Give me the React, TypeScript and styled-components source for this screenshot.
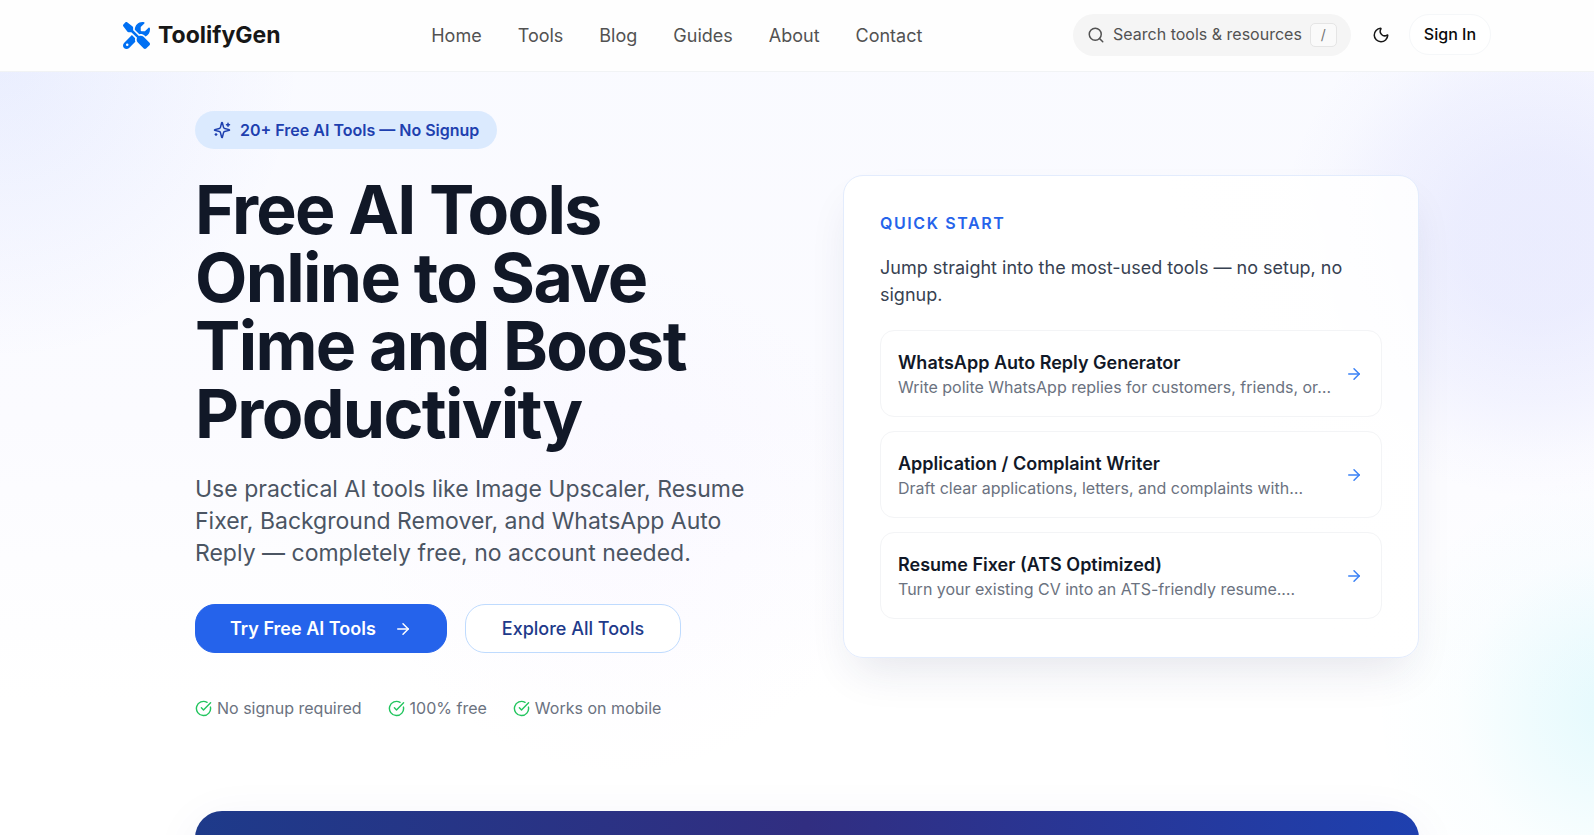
import React from "react";
import styled, { createGlobalStyle } from "styled-components";
import { ArrowRight, CircleCheckBig, Moon, Search } from "lucide-react";

const Global = createGlobalStyle`
  *, *::before, *::after { box-sizing: border-box; }
  body {
    margin: 0;
    background: #ffffff;
    color: #111827;
    font-family: Inter, "Liberation Sans", sans-serif;
    font-size: 18px;
    line-height: 27px;
  }
  a { color: inherit; text-decoration: none; }
  button { font: inherit; cursor: pointer; }
  h1, h2, h3, p, ul { margin: 0; padding: 0; }
`;

const Page = styled.div`
  min-height: 100vh;
  overflow: hidden;
  background:
    radial-gradient(circle 260px at calc(100% - 56px) 240px, rgba(129, 140, 248, 0.13), rgba(129, 140, 248, 0.12) 30%, rgba(129, 140, 248, 0.07) 62%, rgba(129, 140, 248, 0.02) 84%, rgba(129, 140, 248, 0) 100%),
    radial-gradient(circle 240px at calc(100% + 20px) 710px, rgba(34, 211, 238, 0.12), rgba(34, 211, 238, 0.08) 30%, rgba(34, 211, 238, 0.02) 65%, rgba(34, 211, 238, 0) 100%),
    radial-gradient(circle 300px at 0 60px, rgba(96, 130, 250, 0.1), rgba(96, 130, 250, 0.05) 50%, rgba(96, 130, 250, 0) 100%),
    radial-gradient(circle 260px at 620px 520px, rgba(216, 180, 254, 0.05), rgba(216, 180, 254, 0) 100%),
    linear-gradient(180deg, #f9faff 0, #fbfbff 420px, #ffffff 700px);
`;

const Header = styled.header`
  padding-left: 20px;
  background: #fefefe;
  border-bottom: 1px solid #f1f3f5;
`;

const HeaderInner = styled.div`
  display: flex;
  align-items: center;
  justify-content: space-between;
  max-width: 1440px;
  height: 71px;
  margin: 0 auto;
  padding: 0 36px;
`;

const Brand = styled.a`
  display: flex;
  align-items: center;
  gap: 8px;
  color: #171717;
  font-size: 23px;
  font-weight: 700;
`;

const Nav = styled.nav`
  display: flex;
  gap: 36px;
  color: #525252;
`;

const Actions = styled.div`
  display: flex;
  align-items: center;
  padding-bottom: 2px;
`;

const SearchButton = styled.button`
  display: flex;
  align-items: center;
  gap: 8px;
  height: 42px;
  padding: 0 14px;
  border: 0;
  border-radius: 21px;
  background: #f5f5f5;
  color: #525252;
  font-size: 16px;
`;

const Key = styled.kbd`
  display: grid;
  place-items: center;
  width: 27px;
  height: 24px;
  border: 1px solid #e5e5e5;
  border-radius: 5px;
  background: #fafafa;
  color: #737373;
  font: 14px Inter, sans-serif;
`;

const ThemeButton = styled.button`
  display: grid;
  place-items: center;
  width: 40px;
  height: 40px;
  margin: 0 8px 0 10px;
  padding: 0;
  border: 0;
  background: none;
  color: #171717;
`;

const SignIn = styled.a`
  padding: 6px 14px;
  border: 1px solid #f5f7f9;
  border-radius: 20px;
  background: #ffffff;
  color: #0a0a0a;
  font-size: 16px;
  font-weight: 500;
`;

const Main = styled.main`
  padding-left: 20px;
`;

const Container = styled.div`
  max-width: 1296px;
  margin: 0 auto;
  padding: 39px 36px 0;
`;

const Hero = styled.section`
  display: grid;
  grid-template-columns: 1fr 1fr;
  align-items: center;
  gap: 72px;
`;

const Badge = styled.div`
  display: inline-flex;
  align-items: center;
  gap: 9px;
  height: 38px;
  padding: 0 18px;
  border-radius: 19px;
  background: #dbeafe;
  color: #1e40af;
  font-size: 16px;
  font-weight: 600;
`;

const Intro = styled.div`
  display: flex;
  flex-direction: column;
  align-items: flex-start;
  padding-bottom: 2px;
`;

const Title = styled.h1`
  margin-top: 26px;
  font-size: 68px;
  font-weight: 700;
  line-height: 68px;
  letter-spacing: -0.025em;
`;

const Lead = styled.p`
  margin-top: 26px;
  color: #4b5563;
  font-size: 23px;
  line-height: 32px;
`;

const ButtonRow = styled.div`
  display: flex;
  gap: 18px;
  margin-top: 35px;
`;

const CtaLink = styled.a<{ $primary?: boolean }>`
  display: flex;
  align-items: center;
  gap: 18px;
  height: 49px;
  padding: 0 ${(p) => (p.$primary ? 34 : 36)}px;
  border: 1px solid ${(p) => (p.$primary ? "#2563eb" : "#bfdbfe")};
  border-radius: 20px;
  background: ${(p) => (p.$primary ? "#2563eb" : "#ffffff")};
  color: ${(p) => (p.$primary ? "#ffffff" : "#1e3a8a")};
  font-weight: ${(p) => (p.$primary ? 600 : 500)};
`;

const Perks = styled.ul`
  display: flex;
  gap: 26px;
  margin-top: 43px;
  list-style: none;
  color: #6b7280;
  font-size: 16px;
  line-height: 24px;
`;

const Perk = styled.li`
  display: flex;
  align-items: center;
  gap: 5px;
  svg { color: #22c55e; }
`;

const Card = styled.section`
  padding: 36px 36px 38px;
  border: 1px solid #e3ecfd;
  border-radius: 20px;
  background: linear-gradient(250deg, rgba(255, 255, 255, 0.85), #ffffff 35%);
  box-shadow: 0 22px 45px -12px rgba(30, 41, 90, 0.12);
`;

const CardLabel = styled.h2`
  color: #2563eb;
  font-size: 16px;
  font-weight: 600;
  line-height: 22px;
  letter-spacing: 0.1em;
`;

const CardText = styled.p`
  margin-top: 20px;
  color: #374151;
`;

const ToolList = styled.div`
  display: grid;
  gap: 14px;
  margin-top: 22px;
`;

const ToolLink = styled.a`
  display: flex;
  align-items: center;
  justify-content: space-between;
  padding: 18px 18px 18px 17px;
  border: 1px solid #f3f4f6;
  border-radius: 14px;
  background: rgba(255, 255, 255, 0.8);
  svg { color: #3b82f6; }
`;

const ToolName = styled.h3`
  font-size: 18px;
  font-weight: 600;
  line-height: 27px;
`;

const ToolText = styled.p`
  color: #6b7280;
  font-size: 16px;
  line-height: 22px;
`;

const Banner = styled.section`
  height: 216px;
  margin-top: 89px;
  border-radius: 27px;
  background: linear-gradient(90deg, #1e3a8a, #312e81 50%, #1e40af);
  box-shadow: 0 10px 50px rgba(30, 58, 138, 0.06);
`;

const navItems = ["Home", "Tools", "Blog", "Guides", "About", "Contact"];
const perks = ["No signup required", "100% free", "Works on mobile"];
const tools = [
  { name: "WhatsApp Auto Reply Generator", text: "Write polite WhatsApp replies for customers, friends, or…" },
  { name: "Application / Complaint Writer", text: "Draft clear applications, letters, and complaints with…" },
  { name: "Resume Fixer (ATS Optimized)", text: "Turn your existing CV into an ATS-friendly resume.…" },
];

function Logo() {
  return (
    <svg width="27" height="27" viewBox="0 0 512 512" fill="#0070f3" aria-hidden="true">
      <path d="M78.6 5C69.1-2.4 55.6-1.5 47 7L7 47c-8.5 8.5-9.4 22-2.1 31.6l80 104c4.5 5.9 11.600 9.400 19 9.400h54.100l109 109c-14.700 29-10 65.400 14.300 89.600l112 112c12.500 12.500 32.800 12.500 45.300 0l64-64c12.500-12.500 12.500-32.800 0-45.300l-112-112c-24.200-24.200-60.600-29-89.600-14.300l-109-109V104c0-7.500-3.500-14.500-9.400-19L78.600 5zM19.900 396.100C7.200 408.800 0 426.100 0 444.100C0 481.600 30.400 512 67.900 512c18 0 35.300-7.200 48-19.900L233.700 374.300c-7.800-20.900-9-43.600-3.600-65.100l-61.700-61.700L19.900 396.100zM512 144c0-10.500-1.100-20.700-3.200-30.500c-2.400-11.200-16.100-14.100-24.200-6l-63.900 63.900c-3 3-7.100 4.700-11.300 4.700H352c-8.800 0-16-7.200-16-16V102.600c0-4.200 1.700-8.300 4.700-11.300l63.900-63.900c8.100-8.100 5.200-21.800-6-24.200C388.700 1.100 378.500 0 368 0C288.500 0 224 64.500 224 144l0 .8 85.300 85.300c36-9.100 75.800 .5 104 28.700L429 274.500c49-23 83-72.800 83-130.500zM56 432a24 24 0 1 1 48 0 24 24 0 1 1-48 0z" />
    </svg>
  );
}

function SparklesIcon() {
  return (
    <svg width="18" height="18" viewBox="0 0 24 24" fill="none" stroke="currentColor" strokeWidth="2" strokeLinecap="round" strokeLinejoin="round" aria-hidden="true">
      <path d="M9.937 15.5A2 2 0 0 0 8.5 14.063l-6.135-1.582a.5.5 0 0 1 0-.962L8.5 9.936A2 2 0 0 0 9.937 8.500l1.582-6.135a.5.5 0 0 1 .963 0L14.063 8.500A2 2 0 0 0 15.500 9.937l6.135 1.581a.5.5 0 0 1 0 .964L15.500 14.063a2 2 0 0 0-1.437 1.437l-1.582 6.135a.5.5 0 0 1-.963 0z" />
      <path d="M20 3v4M22 5h-4M4 17v2M5 18H3" />
    </svg>
  );
}

export default function App() {
  return (
    <>
      <Global />
      <Page>
        <Header>
          <HeaderInner>
            <Brand href="#"><Logo />ToolifyGen</Brand>
            <Nav>{navItems.map((n) => <a key={n} href="#">{n}</a>)}</Nav>
            <Actions>
              <SearchButton type="button">
                <Search size={18} />
                <span>Search tools &amp; resources</span>
                <Key>/</Key>
              </SearchButton>
              <ThemeButton type="button" aria-label="Toggle theme"><Moon size={18} /></ThemeButton>
              <SignIn href="#">Sign In</SignIn>
            </Actions>
          </HeaderInner>
        </Header>
        <Main>
          <Container>
            <Hero>
              <Intro>
                <Badge><SparklesIcon />20+ Free AI Tools — No Signup</Badge>
                <Title>Free AI Tools Online to Save Time and Boost Productivity</Title>
                <Lead>
                  Use practical AI tools like Image Upscaler, Resume Fixer, Background Remover, and
                  WhatsApp Auto Reply — completely free, no account needed.
                </Lead>
                <ButtonRow>
                  <CtaLink href="#" $primary>Try Free AI Tools<ArrowRight size={18} /></CtaLink>
                  <CtaLink href="#">Explore All Tools</CtaLink>
                </ButtonRow>
                <Perks>
                  {perks.map((p) => <Perk key={p}><CircleCheckBig size={17} />{p}</Perk>)}
                </Perks>
              </Intro>
              <Card>
                <CardLabel>QUICK START</CardLabel>
                <CardText>Jump straight into the most-used tools — no setup, no signup.</CardText>
                <ToolList>
                  {tools.map((t) => (
                    <ToolLink key={t.name} href="#">
                      <div>
                        <ToolName>{t.name}</ToolName>
                        <ToolText>{t.text}</ToolText>
                      </div>
                      <ArrowRight size={18} />
                    </ToolLink>
                  ))}
                </ToolList>
              </Card>
            </Hero>
            <Banner />
          </Container>
        </Main>
      </Page>
    </>
  );
}
